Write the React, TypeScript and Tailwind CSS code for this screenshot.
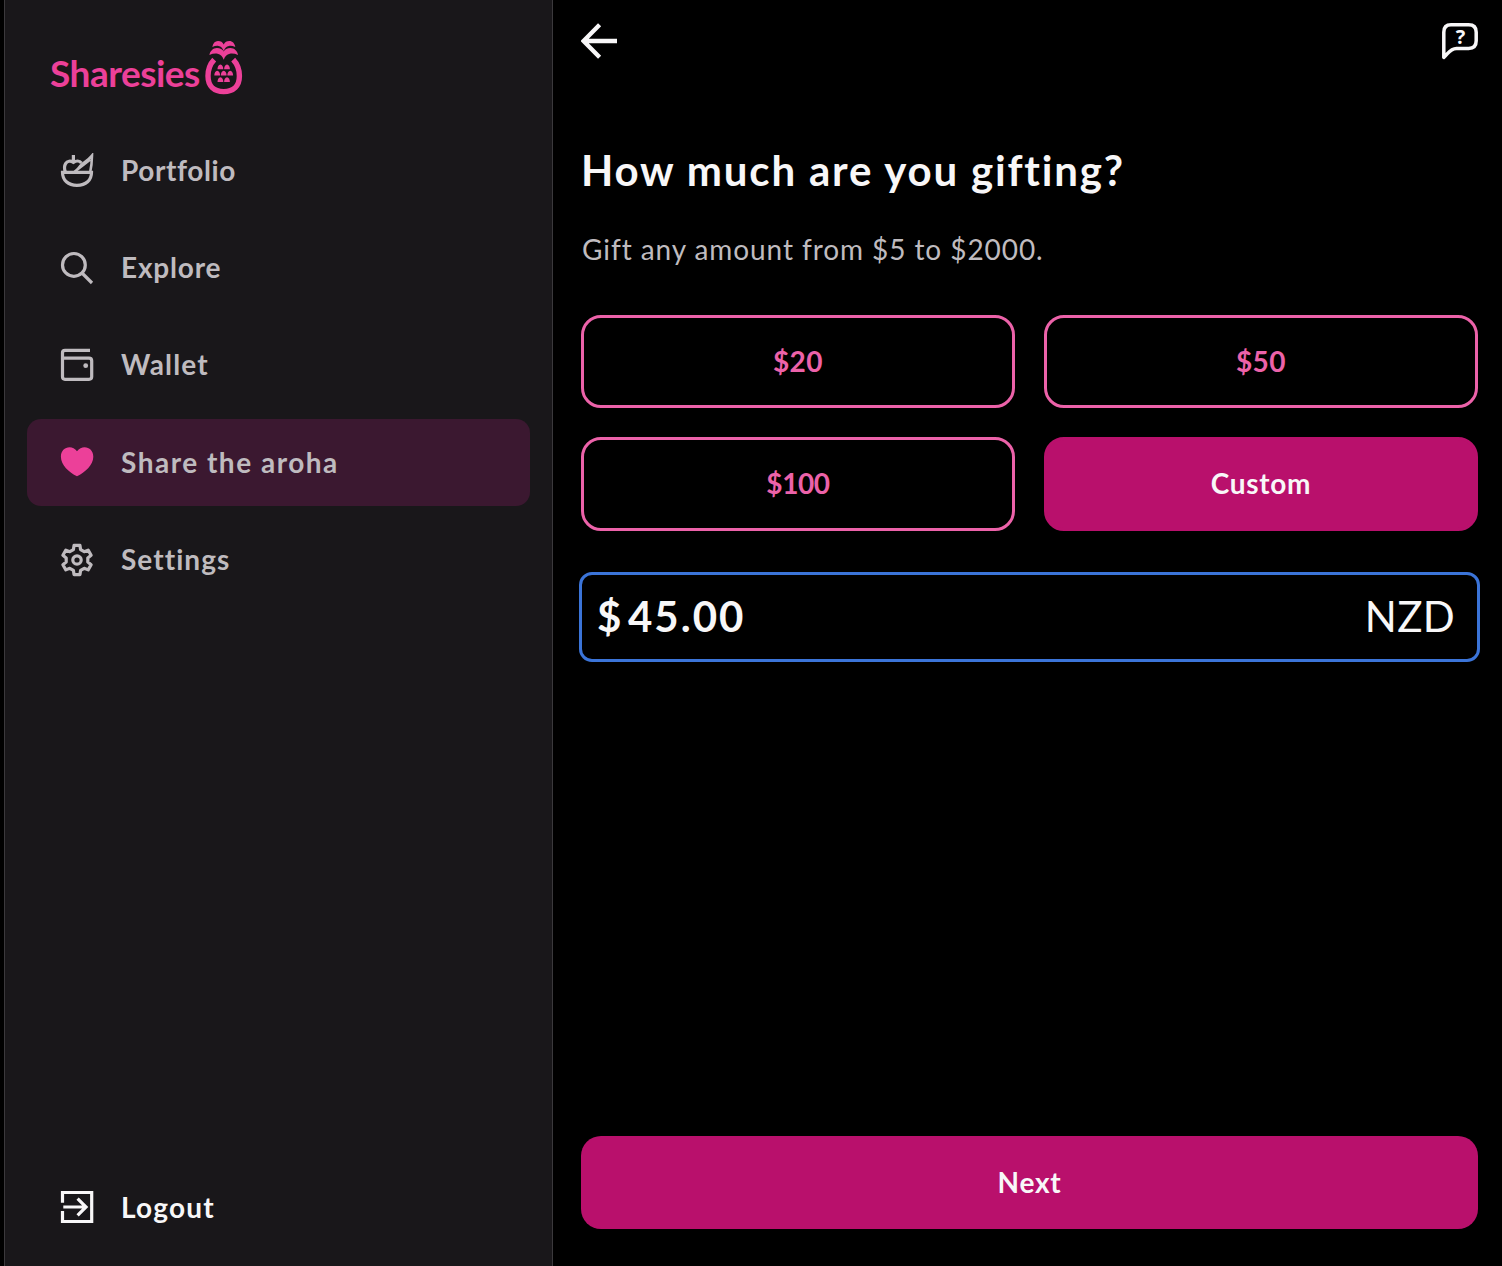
import type { ReactNode } from 'react';

function Icon({ children, className = 'text-[#bfbbbf]', width = 3.2 }: { children: ReactNode; className?: string; width?: number }) {
  return (
    <svg
      width="36"
      height="36"
      viewBox="0 0 36 36"
      fill="none"
      stroke="currentColor"
      strokeWidth={width}
      className={`shrink-0 ${className}`}
    >
      {children}
    </svg>
  );
}

const gearPoints = Array.from({ length: 6 }, (_, i) => i * 60 - 90)
  .flatMap((a) => [
    [a - 19, 11],
    [a - 11.5, 14.9],
    [a + 11.5, 14.9],
    [a + 19, 11],
  ])
  .map(([a, r]) => {
    const t = (a * Math.PI) / 180;
    return `${(17 + r * Math.cos(t)).toFixed(2)},${(18 + r * Math.sin(t)).toFixed(2)}`;
  })
  .join(' ');

const seeds = [
  [20.4, 33.2],
  [27, 33.2],
  [17.2, 39.6],
  [23.7, 39.6],
  [30.2, 39.6],
  [20.4, 46],
  [27, 46],
];

function Logo() {
  return (
    <div className="flex h-[60px] items-start pl-[45px] text-[#ec4099]">
      <span className="mt-[15px] w-[150px] whitespace-nowrap text-[37px] font-bold leading-[44px] tracking-[-0.5px]">Sharesies</span>
      <svg width="48" height="60" viewBox="0 0 48 60" fill="currentColor">
        <path
          d="M14.2 23.6C10 28 8 34 8 40C8 50 14 55.6 23.7 55.6S39.4 50 39.4 40C39.4 34 37.4 28 33.2 23.6"
          fill="none"
          stroke="currentColor"
          strokeWidth="5.4"
        />
        <path d="M23.7 23.8C22.6 20.4 20.6 18.4 17.6 17.8C15 17.3 12.4 17.8 9.4 18.9C10.2 14.8 13.2 12 16.9 12C20.2 12 22.6 13.3 23.7 15.6C24.8 13.3 27.2 12 30.5 12C34.2 12 37.3 14.8 38.1 18.9C35.1 17.8 32.4 17.3 29.8 17.8C26.8 18.4 24.8 20.4 23.7 23.8Z" />
        <path d="M23.7 15C22.5 11.6 21 10.3 18.6 9.9C16.6 9.6 14.7 9.9 12.3 10.9C13 7.2 15 5 18 5C20.7 5 22.7 6.2 23.7 8.4C24.7 6.2 26.7 5 29.4 5C32.4 5 34.6 7.2 35.3 10.9C32.9 9.9 31 9.6 28.9 9.9C26.4 10.3 24.9 11.6 23.7 15Z" />
        {seeds.map(([x, y]) => (
          <path key={`${x}-${y}`} d={`M${x - 2.9} ${y}C${x - 2.9} ${y - 2.6} ${x - 1.8} ${y - 4.8} ${x} ${y - 4.8}S${x + 2.9} ${y - 2.6} ${x + 2.9} ${y}Z`} />
        ))}
      </svg>
    </div>
  );
}

const nav = [
  {
    label: 'Portfolio',
    tracking: 'tracking-[0.6px]',
    icon: (
      <Icon>
        <path d="M2.5 19.3H31.5C31.5 27.3 26 32.3 17 32.3S2.5 27.3 2.5 19.3Z" />
        <path d="M13.4 2V9M5.4 19C4.4 16.5 4.2 13 5.6 10.6C7.2 7.8 10.6 7.5 13.4 9.4C16 7.7 19.4 7.4 21.4 10" />
        <path d="M14.5 18.8C17.5 17 18.8 15.4 20.4 12.8C22.2 9.9 27.4 8.4 32 2.6C31.9 8 31.6 13.2 30.2 19M14.5 18.8L30 6.8" strokeWidth="2.6" />
      </Icon>
    ),
  },
  {
    label: 'Explore',
    tracking: 'tracking-[0.8px]',
    icon: (
      <Icon>
        <circle cx="13.9" cy="14.9" r="11.4" />
        <path d="M22 23L32 33" />
      </Icon>
    ),
  },
  {
    label: 'Wallet',
    tracking: 'tracking-[1.1px]',
    icon: (
      <Icon>
        <path d="M30 3.3H5Q2.5 3.3 2.5 5.8V29.8Q2.5 32.3 5 32.3H29Q31.7 32.3 31.7 29.8V13.8Q31.7 11.1 29 11.1H2.5" />
        <circle cx="25.7" cy="18.7" r="2.4" fill="currentColor" stroke="none" />
      </Icon>
    ),
  },
  {
    label: 'Share the aroha',
    tracking: 'tracking-[1.5px]',
    active: true,
    icon: (
      <Icon className="text-[#ec4099]">
        <path
          stroke="none"
          fill="currentColor"
          d="M17 6.3C19 3.4 22 2.3 24.5 2.3C29.5 2.3 33.3 6 33.3 11.7C33.3 20 25 27.2 17 31.3C9 27.2 .9 20 .9 11.7C.9 6 4.7 2.3 9.6 2.3C12.3 2.3 15 3.4 17 6.3Z"
        />
      </Icon>
    ),
  },
  {
    label: 'Settings',
    tracking: 'tracking-[1.05px]',
    icon: (
      <Icon>
        <polygon points={gearPoints} strokeLinejoin="round" />
        <circle cx="17" cy="18" r="4.2" />
      </Icon>
    ),
  },
];

const amounts = [
  { label: '$20', look: 'h-[93px] border-[#ec62a9] text-[#ec62a9] tracking-[0.5px]' },
  { label: '$50', look: 'h-[93px] border-[#ec62a9] text-[#ec62a9] tracking-[0.5px]' },
  { label: '$100', look: 'h-[94px] border-[#ec62a9] text-[#ec62a9] tracking-[-0.4px]' },
  { label: 'Custom', look: 'h-[94px] border-[#b9106c] bg-[#b9106c] tracking-[0.7px]' },
];

export default function App() {
  return (
    <div className="flex h-[1266px] w-[1502px] overflow-hidden bg-black pl-1 font-['Lato',sans-serif] text-[28px] leading-[34px] text-[#f8f7f8]">
      <aside className="flex w-[549px] shrink-0 flex-col border-x border-[#3b393c] bg-[#19171a] pb-[15px] pt-9">
        <Logo />
        <nav className="mt-[31px] flex flex-col gap-[10.4px] px-[22px]">
          {nav.map((item) => (
            <a
              key={item.label}
              className={`flex h-[87px] items-center gap-[25px] rounded-[14px] pl-[33px] font-bold text-[#bfbbbf] ${item.active ? 'bg-[#3b1830]' : ''}`}
            >
              {item.icon}
              <span className={`-mt-0.5 whitespace-nowrap ${item.tracking}`}>{item.label}</span>
            </a>
          ))}
        </nav>
        <a className="mx-[22px] mt-auto flex h-[87px] items-center gap-[25px] pl-[33px] font-bold">
          <Icon className="text-[#f8f7f8]">
            <path d="M2.5 12.7V2.5H31.7V31.5H2.5V20.9M3.3 17H26M17.6 8.6L26 17L17.6 25.4" />
          </Icon>
          <span className="-mt-0.5 tracking-[1.2px]">Logout</span>
        </a>
      </aside>
      <main className="flex min-w-0 flex-1 flex-col pb-[37px] pl-7 pr-6 pt-[22px]">
        <header className="flex h-[38px] items-center justify-between">
          <svg width="38" height="38" viewBox="0 0 38 38" fill="none" stroke="currentColor" strokeWidth="4.4">
            <path d="M18.6 2.8L2.5 19L18.6 35.2M2.5 19H36" />
          </svg>
          <svg width="38" height="38" viewBox="0 0 38 38" fill="none" stroke="currentColor" strokeWidth="3.5" strokeLinejoin="round">
            <path d="M3.8 35.4V10.2Q3.8 2.8 11 2.8H28.6Q36.2 2.8 36.2 10.2V18.8Q36.2 26.4 28.6 26.4H16.5C10 26.4 8.3 31.4 3.8 35.4Z" />
            <text x="20.5" y="21.8" textAnchor="middle" fill="currentColor" stroke="none" className="font-['Open_Sans',sans-serif] text-[20px] font-bold">
              ?
            </text>
          </svg>
        </header>
        <h1 className="mt-[83px] whitespace-nowrap text-[42px] font-bold leading-[54px] tracking-[1.82px]">How much are you gifting?</h1>
        <p className="mt-[35px] whitespace-nowrap pl-px tracking-[0.92px] text-[#bfbbbf]">Gift any amount from $5 to $2000.</p>
        <div className="mt-[49px] grid grid-cols-2 gap-[29px]">
          {amounts.map(({ label, look }) => (
            <button key={label} className={`rounded-[20px] border-[3px] pb-0.5 font-bold ${look}`}>
              {label}
            </button>
          ))}
        </div>
        <div className="-mx-0.5 mt-[41px] flex h-[90px] items-center rounded-[13px] border-[3px] border-[#3b74d8] pb-0.5 pl-[15px] pr-[22px] text-[42px] leading-[50px]">
          <span className="w-[31px] font-bold">$</span>
          <span className="font-bold tracking-[2px]">45.00</span>
          <span className="ml-auto tracking-[0.3px]">NZD</span>
        </div>
        <button className="mt-auto h-[93px] shrink-0 rounded-[20px] bg-[#b9106c] pb-0.5 font-bold tracking-[0.8px]">Next</button>
      </main>
    </div>
  );
}
